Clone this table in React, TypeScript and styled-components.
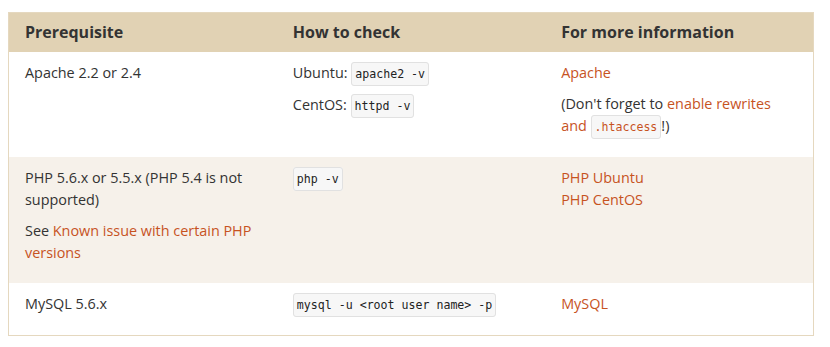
import styled, { createGlobalStyle } from 'styled-components';

const GlobalStyle = createGlobalStyle`
	body {
		margin: 8px;
		background: #ffffff;
		font-family: 'Open Sans', 'Liberation Sans', sans-serif;
		color: #333333;
	}
`;

const Table = styled.table`
	width: 806px;
	margin-top: 4px;
	border-collapse: collapse;
	table-layout: fixed;
	border: 1px solid #e5d8bf;
	font-size: 14.4px;
	line-height: 22px;
`;

const HeadCell = styled.th`
	background: #e1d2b4;
	text-align: left;
	font-size: 16px;
	font-weight: 700;
	color: #333333;
	padding: 8px 16px 9px;
	line-height: 22px;
`;

type RowProps = {
	shaded?: boolean;
};
const Row = styled.tr<RowProps>`
	background: ${({ shaded }) => (shaded ? '#f6f1ea' : '#ffffff')};
`;

const Cell = styled.td`
	vertical-align: top;
	padding: 10px 16px 10px;
`;

const Para = styled.p`
	margin: 0 0 9px;
`;

const Link = styled.a`
	color: #c7531f;
	text-decoration: none;
`;

type CodeProps = {
	accent?: boolean;
};
const Code = styled.code<CodeProps>`
	font-family: 'DejaVu Sans Mono', 'Liberation Mono', monospace;
	font-size: 11.6px;
	background: #f7f7f7;
	border: 1px solid #e1e1e1;
	border-radius: 3px;
	padding: 4px 3px;
	color: ${({ accent }) => (accent ? '#c7531f' : '#222222')};
`;

const App = () => {
	return (
		<>
			<GlobalStyle />
			<Table>
				<thead>
					<tr>
						<HeadCell>Prerequisite</HeadCell>
						<HeadCell>How to check</HeadCell>
						<HeadCell>For more information</HeadCell>
					</tr>
				</thead>
				<tbody>
					<Row>
						<Cell>
							<Para>Apache 2.2 or 2.4</Para>
						</Cell>
						<Cell>
							<Para>
								Ubuntu: <Code>apache2 -v</Code>
							</Para>
							<Para>
								CentOS: <Code>httpd -v</Code>
							</Para>
						</Cell>
						<Cell>
							<Para>
								<Link href='#'>Apache</Link>
							</Para>
							<Para>
								(Don't forget to <Link href='#'>enable rewrites and </Link>
								<Code accent>.htaccess</Code>!)
							</Para>
						</Cell>
					</Row>
					<Row shaded>
						<Cell>
							<Para>PHP 5.6.x or 5.5.x (PHP 5.4 is not supported)</Para>
							<Para>
								See <Link href='#'>Known issue with certain PHP versions</Link>
							</Para>
						</Cell>
						<Cell>
							<Para>
								<Code>php -v</Code>
							</Para>
						</Cell>
						<Cell>
							<Para>
								<Link href='#'>PHP Ubuntu</Link>
								<br />
								<Link href='#'>PHP CentOS</Link>
							</Para>
						</Cell>
					</Row>
					<Row>
						<Cell>
							<Para>MySQL 5.6.x</Para>
						</Cell>
						<Cell>
							<Para>
								<Code>mysql -u &lt;root user name&gt; -p</Code>
							</Para>
						</Cell>
						<Cell>
							<Para>
								<Link href='#'>MySQL</Link>
							</Para>
						</Cell>
					</Row>
				</tbody>
			</Table>
		</>
	);
};

export default App;
